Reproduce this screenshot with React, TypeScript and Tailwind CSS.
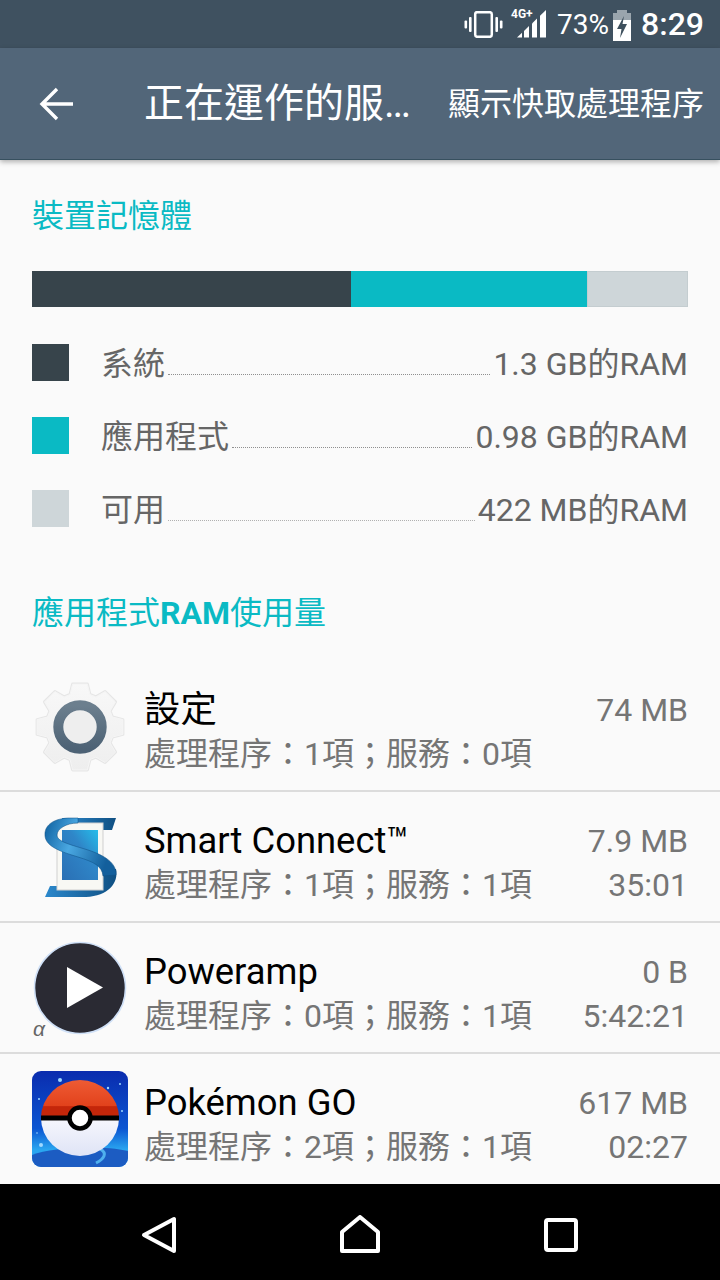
const legend = [
  { label: '系統', value: '1.3 GB的RAM', color: 'bg-[#37444b]', dots: 'border-[#8f8f8f]' },
  { label: '應用程式', value: '0.98 GB的RAM', color: 'bg-[#0abac4]', dots: 'border-[#8f8f8f]' },
  { label: '可用', value: '422 MB的RAM', color: 'bg-[#ced6d9]', dots: 'border-[#b0b0b0]' },
]

// 8 tooth gear outline, centred on 48,49
const gearPath = (() => {
  const points: string[] = []
  for (let i = 0; i < 8; i++) {
    const mid = (i * Math.PI) / 4 - Math.PI / 2
    const at = (r: number, a: number) => `${(48 + r * Math.cos(a)).toFixed(1)} ${(49 + r * Math.sin(a)).toFixed(1)}`
    points.push(at(34, mid - 0.3), at(43.5, mid - 0.17), at(43.5, mid + 0.17), at(34, mid + 0.3))
  }
  return `M${points.join(' L')} Z`
})()

function VibrateIcon() {
  return (
    <svg width="39" height="27" viewBox="0 0 39 27" fill="#fff">
      <rect x="11.2" y="1.2" width="16.6" height="24.6" rx="2" fill="none" stroke="#fff" strokeWidth="2.5" />
      <rect x="5" y="6" width="2.6" height="15" rx="1" />
      <rect x="0.5" y="9.5" width="2.6" height="8" rx="1" />
      <rect x="31.4" y="6" width="2.6" height="15" rx="1" />
      <rect x="35.9" y="9.5" width="2.6" height="8" rx="1" />
    </svg>
  )
}

function SignalIcon() {
  return (
    <div className="relative h-[32px] w-[36px]">
      <span className="absolute top-[0px] left-0 text-[12px] leading-[12px] font-bold text-white">4G+</span>
      <svg className="absolute inset-0" width="36" height="32" viewBox="0 0 36 32" fill="#fff">
        <path d="M6 29.5 L11 24.8 V29.5 Z" />
        <path d="M13 23 L18 18 V29.5 H13 Z" />
        <path d="M21 15.4 L26 10.6 V29.5 H21 Z" />
        <path d="M29 7.8 L35 2 V29.5 H29 Z" />
      </svg>
    </div>
  )
}

function BatteryIcon() {
  return (
    <svg width="20" height="31" viewBox="0 0 20 31">
      <rect x="5" y="0" width="10" height="4" fill="#9aa5ad" />
      <rect x="1" y="3" width="18" height="7" fill="#9aa5ad" />
      <rect x="1" y="10" width="18" height="21" fill="#fff" />
      <path d="M12 6 L5 19 H9.5 L8 28 L15 14 H10.5 Z" fill="#3e505d" />
    </svg>
  )
}

function SettingsIcon() {
  return (
    <svg width="96" height="96" viewBox="0 0 96 96">
      <defs>
        <linearGradient id="gear" x1="0" y1="0" x2="0" y2="1">
          <stop offset="0" stopColor="#f8f8f8" />
          <stop offset="1" stopColor="#eeeeee" />
        </linearGradient>
        <linearGradient id="ring" x1="0" y1="0" x2="0" y2="1">
          <stop offset="0" stopColor="#6c7f8e" />
          <stop offset="1" stopColor="#4d6275" />
        </linearGradient>
      </defs>
      <path d={gearPath} fill="url(#gear)" stroke="#e6e6e6" strokeWidth="3" strokeLinejoin="round" />
      <path d={gearPath} fill="url(#gear)" stroke="#f5f5f5" strokeWidth="1" strokeLinejoin="round" />
      <circle cx="48" cy="49" r="21.7" fill="#eeeeee" stroke="url(#ring)" strokeWidth="10" />
    </svg>
  )
}

function SmartConnectIcon() {
  return (
    <svg width="96" height="96" viewBox="0 0 96 96">
      <defs>
        <linearGradient id="screen" x1="0" y1="1" x2="1" y2="0">
          <stop offset="0" stopColor="#2a6fb4" />
          <stop offset="0.6" stopColor="#2f86c8" />
          <stop offset="1" stopColor="#25bdea" />
        </linearGradient>
        <linearGradient id="band" x1="0" y1="0" x2="1" y2="0.3">
          <stop offset="0" stopColor="#0e5f9e" />
          <stop offset="0.45" stopColor="#4aa8e2" />
          <stop offset="1" stopColor="#135f9c" />
        </linearGradient>
        <linearGradient id="back" x1="0" y1="0" x2="1" y2="0">
          <stop offset="0" stopColor="#2b88cc" />
          <stop offset="1" stopColor="#0f4f82" />
        </linearGradient>
      </defs>
      <path d="M84 9 L80 21 H30 V9 Z" fill="url(#back)" />
      <path d="M84 60 C87 74 76 87 54 88 H13 L18 77 H60 L72 60 Z" fill="url(#back)" />
      <rect x="25" y="14" width="46" height="67" fill="#f8f8f4" stroke="#cfcfcf" />
      <rect x="30" y="21" width="36" height="50" fill="url(#screen)" />
      <path
        d="M46 9 H36 C20 10 12 17 13 27 C14 38 30 43 46 48 C62 53 70 57 71 67 L84 66 C85 54 72 46 56 41 C40 36 25 33 25 26 C25 20 34 14 46 14 Z"
        fill="url(#band)"
        stroke="#0f4f82"
        strokeWidth="0.5"
      />
    </svg>
  )
}

function PowerampIcon() {
  return (
    <div className="relative h-[96px] w-[96px]">
      <svg width="96" height="96" viewBox="0 0 96 96">
        <circle cx="48" cy="48" r="45.5" fill="#2a2a33" stroke="#cfe0f7" strokeWidth="1.6" />
        <path d="M35 27 V68 L71 47.5 Z" fill="#fff" />
      </svg>
      <span className="absolute bottom-[-3px] left-[1px] font-['Liberation_Sans'] text-[21px] leading-[21px] text-[#666] italic">α</span>
    </div>
  )
}

function PokemonIcon() {
  return (
    <svg width="96" height="96" viewBox="0 0 96 96">
      <defs>
        <linearGradient id="sky" x1="0" y1="0" x2="0" y2="1">
          <stop offset="0" stopColor="#0a2cae" />
          <stop offset="0.6" stopColor="#0b55d2" />
          <stop offset="0.82" stopColor="#2aa6f0" />
        </linearGradient>
        <linearGradient id="red" x1="0" y1="0" x2="0" y2="1">
          <stop offset="0" stopColor="#ee5b34" />
          <stop offset="0.68" stopColor="#e2421c" />
          <stop offset="0.7" stopColor="#c4260a" />
          <stop offset="1" stopColor="#c4260a" />
        </linearGradient>
        <linearGradient id="white" x1="0" y1="0" x2="0" y2="1">
          <stop offset="0" stopColor="#f6f7fd" />
          <stop offset="1" stopColor="#dfe4f6" />
        </linearGradient>
      </defs>
      <rect width="96" height="96" rx="9" fill="url(#sky)" />
      <g fill="#9fd8ff">
        <circle cx="28" cy="9" r="2" />
        <circle cx="76" cy="17" r="1.2" />
        <circle cx="88" cy="13" r="1" />
        <circle cx="7" cy="28" r="1" />
        <circle cx="90" cy="40" r="1" />
        <circle cx="9" cy="74" r="2" />
        <circle cx="5" cy="62" r="0.8" />
      </g>
      <path d="M0 84 C20 76 70 74 96 80 V87 A9 9 0 0 1 87 96 H9 A9 9 0 0 1 0 87 Z" fill="#1c5cc2" />
      <path d="M68 78 C76 82 72 88 64 92" fill="none" stroke="#4fb0ee" strokeWidth="3" />
      <path d="M9 47 A39 38 0 0 1 87 47 Z" fill="url(#red)" />
      <path d="M9 47 A39 38 0 0 0 87 47 Z" fill="url(#white)" />
      <rect x="9" y="44.5" width="78" height="5" fill="#000" />
      <circle cx="48" cy="47" r="10.5" fill="#fff" stroke="#000" strokeWidth="4.5" />
    </svg>
  )
}

const apps = [
  { icon: <SettingsIcon />, name: '設定', procs: '處理程序：1項；服務：0項', size: '74 MB', time: '' },
  { icon: <SmartConnectIcon />, name: 'Smart Connect™', procs: '處理程序：1項；服務：1項', size: '7.9 MB', time: '35:01' },
  { icon: <PowerampIcon />, name: 'Poweramp', procs: '處理程序：0項；服務：1項', size: '0 B', time: '5:42:21' },
  { icon: <PokemonIcon />, name: 'Pokémon GO', procs: '處理程序：2項；服務：1項', size: '617 MB', time: '02:27' },
]

export default function App() {
  return (
    <div className="flex h-[1280px] w-[720px] flex-col overflow-hidden bg-[#fafafa] font-['Roboto','Noto_Sans_CJK_TC',sans-serif]">
      <div className="flex h-[48px] shrink-0 items-center justify-end bg-[#3f5160] pr-[16px] text-white">
        <VibrateIcon />
        <div className="ml-[8px]">
          <SignalIcon />
        </div>
        <span className="mt-[2px] ml-[10px] text-[28px] leading-none">73%</span>
        <div className="mt-[2px] ml-[3px]">
          <BatteryIcon />
        </div>
        <span className="ml-[9px] text-[32px] leading-none font-medium">8:29</span>
      </div>

      <div className="relative z-10 flex h-[112px] shrink-0 items-center border-b border-[#37505f] bg-[#526679] shadow-[0_2px_5px_rgba(0,0,0,0.3)]">
        <svg className="ml-[38px]" width="36" height="36" viewBox="0 0 36 36" fill="none" stroke="#fff" strokeWidth="3.4">
          <path d="M35 18 H4 M19 3 L4 18 L19 33" />
        </svg>
        <h1 className="ml-[70px] w-[270px] text-[40px] leading-none whitespace-nowrap text-white">正在運作的服…</h1>
        <span className="ml-[34px] text-[32px] leading-none whitespace-nowrap text-white">顯示快取處理程序</span>
      </div>

      <div className="flex-1 overflow-hidden">
        <div className="px-[32px] pt-[36px]">
          <h2 className="text-[32px] leading-[40px] text-[#0abac4]">裝置記憶體</h2>
          <div className="mt-[35px] flex h-[36px]">
            <div className="w-[319px] bg-[#37444b]" />
            <div className="w-[236px] bg-[#0abac4]" />
            <div className="flex-1 border border-[#c4cdd0] bg-[#ced6d9]" />
          </div>
          <div className="mt-[37px] flex flex-col gap-[36px]">
            {legend.map((row) => (
              <div key={row.label} className="flex h-[37px] items-center text-[32px] leading-none text-[#666]">
                <div className={`h-[37px] w-[37px] shrink-0 ${row.color}`} />
                <span className="mt-[2px] ml-[32px]">{row.label}</span>
                <div className={`mx-[3px] mt-[24px] flex-1 border-b border-dotted ${row.dots}`} />
                <span className="mt-[2px]">{row.value}</span>
              </div>
            ))}
          </div>
          <h2 className="mt-[66px] text-[32px] leading-[40px] text-[#0abac4]">
            應用程式<span className="font-bold">RAM</span>使用量
          </h2>
        </div>

        <div className="mt-[28px]">
          {apps.map((app, i) => (
            <div
              key={app.name}
              className={`flex h-[131px] items-start px-[32px] ${i < 3 ? 'border-b-2 border-[#dcdcdc]' : ''}`}
            >
              <div className="mt-[17px] h-[96px] w-[96px] shrink-0">{app.icon}</div>
              <div className="mt-[26px] ml-[16px] flex-1 whitespace-nowrap">
                <div className="text-[36.4px] leading-[45px] text-black">{app.name}</div>
                <div className="text-[32px] leading-[44px] text-[#757575]">{app.procs}</div>
              </div>
              <div className="mt-[27px] text-right text-[32px] text-[#757575]">
                <div className="leading-[44px]">{app.size}</div>
                <div className="h-[44px] leading-[44px]">{app.time}</div>
              </div>
            </div>
          ))}
        </div>
      </div>

      <div className="flex h-[96px] shrink-0 items-center bg-black pt-[6px] pl-[140px]">
        <svg width="38" height="40" viewBox="0 0 38 40" fill="none" stroke="#fff" strokeWidth="4" strokeLinejoin="round">
          <path d="M34 4 V36 L4 20 Z" />
        </svg>
        <svg className="ml-[162px]" width="40" height="40" viewBox="0 0 40 40" fill="none" stroke="#fff" strokeWidth="4" strokeLinejoin="round">
          <path d="M20 2 L38 17 V36 H2 V17 Z" />
        </svg>
        <svg className="ml-[163px]" width="36" height="36" viewBox="0 0 36 36" fill="none" stroke="#fff" strokeWidth="4">
          <rect x="3" y="3" width="30" height="30" rx="2" />
        </svg>
      </div>
    </div>
  )
}
